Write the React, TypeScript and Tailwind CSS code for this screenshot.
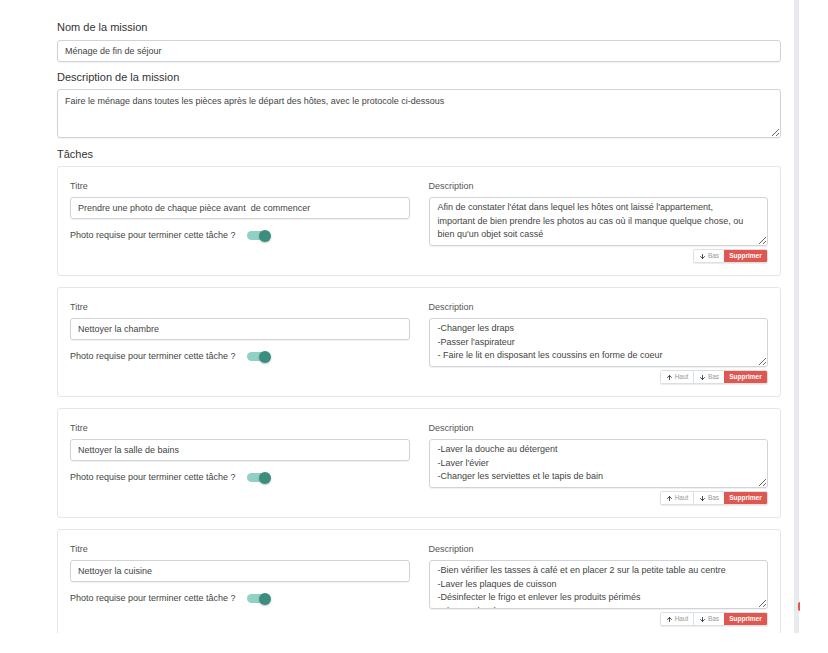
import { ArrowUp, ArrowDown } from "lucide-react";

type Task = {
  title: string;
  description: string;
  canMoveUp: boolean;
};

const tasks: Task[] = [
  {
    title: "Prendre une photo de chaque pièce avant  de commencer",
    description:
      "Afin de constater l'état dans lequel les hôtes ont laissé l'appartement,\nimportant de bien prendre les photos au cas où il manque quelque chose, ou\nbien qu'un objet soit cassé",
    canMoveUp: false,
  },
  {
    title: "Nettoyer la chambre",
    description:
      "-Changer les draps\n-Passer l'aspirateur\n- Faire le lit en disposant les coussins en forme de coeur",
    canMoveUp: true,
  },
  {
    title: "Nettoyer la salle de bains",
    description: "-Laver la douche au détergent\n-Laver l'évier\n-Changer les serviettes et le tapis de bain",
    canMoveUp: true,
  },
  {
    title: "Nettoyer la cuisine",
    description:
      "-Bien vérifier les tasses à café et en placer 2 sur la petite table au centre\n-Laver les plaques de cuisson\n-Désinfecter le frigo et enlever les produits périmés\n-Changer les éponges",
    canMoveUp: true,
  },
];

function Toggle() {
  return (
    <div className="relative w-[24px] h-[12px] flex items-center">
      <div className="w-[20px] h-[9px] rounded-full bg-[#92d0c4]" />
      <div className="absolute right-0 top-0 w-[12px] h-[12px] rounded-full bg-[#3b8e7d] shadow-[0_1px_2px_rgba(0,0,0,0.25)]" />
    </div>
  );
}

function TaskCard({ task }: { task: Task }) {
  return (
    <div className="border border-[#e4e6e9] rounded-[3px] bg-white px-[12px] pt-[12px] pb-[12px] grid grid-cols-2 gap-[19px] shrink-0">
      {/* Left column */}
      <div className="flex flex-col">
        <label className="text-[9px] leading-[14px] text-[#555]">Titre</label>
        <input
          readOnly
          defaultValue={task.title}
          className="mt-[4px] h-[22px] shrink-0 w-full border border-[#cfd4da] rounded-[3px] px-[7px] text-[9px] text-[#444] shadow-[0_1px_1px_rgba(0,0,0,0.06)] outline-none"
        />
        <div className="mt-[10px] flex items-center gap-[11px]">
          <span className="text-[9px] text-[#444]">Photo requise pour terminer cette tâche ?</span>
          <Toggle />
        </div>
      </div>

      {/* Right column */}
      <div className="flex flex-col">
        <label className="text-[9px] leading-[14px] text-[#555]">Description</label>
        <textarea
          readOnly
          defaultValue={task.description}
          className="mt-[4px] h-[49px] shrink-0 w-full border border-[#cfd4da] rounded-[3px] px-[8px] py-[3px] text-[9px] leading-[13.5px] text-[#444] overflow-hidden whitespace-pre-wrap shadow-[0_1px_1px_rgba(0,0,0,0.06)] outline-none resize-y"
        />
        <div className="mt-[3px] flex justify-end">
          <div className="flex h-[14px] rounded-[2px] border border-[#dcdfe3] overflow-hidden text-[6.5px] leading-none shadow-[0_1px_1px_rgba(0,0,0,0.08)]">
            {task.canMoveUp && (
              <button className="flex items-center gap-[2px] w-[33px] justify-center border-r border-[#dcdfe3] bg-white text-[#999]">
                <ArrowUp className="w-[7px] h-[7px] text-[#333]" strokeWidth={3} />
                <span>Haut</span>
              </button>
            )}
            <button className="flex items-center gap-[2px] w-[30px] justify-center bg-white text-[#999]">
              <ArrowDown className="w-[7px] h-[7px] text-[#333]" strokeWidth={3} />
              <span>Bas</span>
            </button>
            <button className="w-[43px] bg-[#e0574f] text-white font-bold flex items-center justify-center">
              Supprimer
            </button>
          </div>
        </div>
      </div>
    </div>
  );
}

export default function App() {
  return (
    <div className="w-[828px] h-[653px] bg-white overflow-hidden" style={{ fontFamily: '"Liberation Sans", Arial, sans-serif' }}>
      <div className="h-[633px] flex overflow-hidden">
        {/* Main form */}
        <div className="w-[794px] pl-[57px] pr-[13px] pt-[19px] flex flex-col">
          <label className="shrink-0 text-[11px] leading-[16px] font-medium text-[#333]">Nom de la mission</label>
          <input
            readOnly
            defaultValue="Ménage de fin de séjour"
            className="mt-[5px] h-[22px] shrink-0 w-full border border-[#cfd4da] rounded-[3px] px-[7px] text-[9px] text-[#444] shadow-[0_1px_1px_rgba(0,0,0,0.06)] outline-none"
          />

          <label className="mt-[7px] shrink-0 text-[11px] leading-[16px] font-medium text-[#333]">Description de la mission</label>
          <textarea
            readOnly
            defaultValue="Faire le ménage dans toutes les pièces après le départ des hôtes, avec le protocole ci-dessous"
            className="mt-[4px] h-[49px] shrink-0 w-full border border-[#cfd4da] rounded-[3px] px-[7px] py-[4px] text-[9px] leading-[14px] text-[#444] overflow-hidden shadow-[0_1px_1px_rgba(0,0,0,0.06)] outline-none resize-y"
          />

          <label className="mt-[8px] shrink-0 text-[11px] leading-[16px] font-medium text-[#333]">Tâches</label>
          <div className="mt-[4px] shrink-0 flex flex-col gap-[11px]">
            {tasks.map((t, i) => (
              <TaskCard key={i} task={t} />
            ))}
          </div>
        </div>

        {/* Scroll strip */}
        <div className="relative w-[5px] bg-[#e8eaed]">
          <div className="absolute left-[4px] top-[602px] w-[2px] h-[9px] rounded-l-full bg-[#e0574f]" />
        </div>
      </div>
    </div>
  );
}
